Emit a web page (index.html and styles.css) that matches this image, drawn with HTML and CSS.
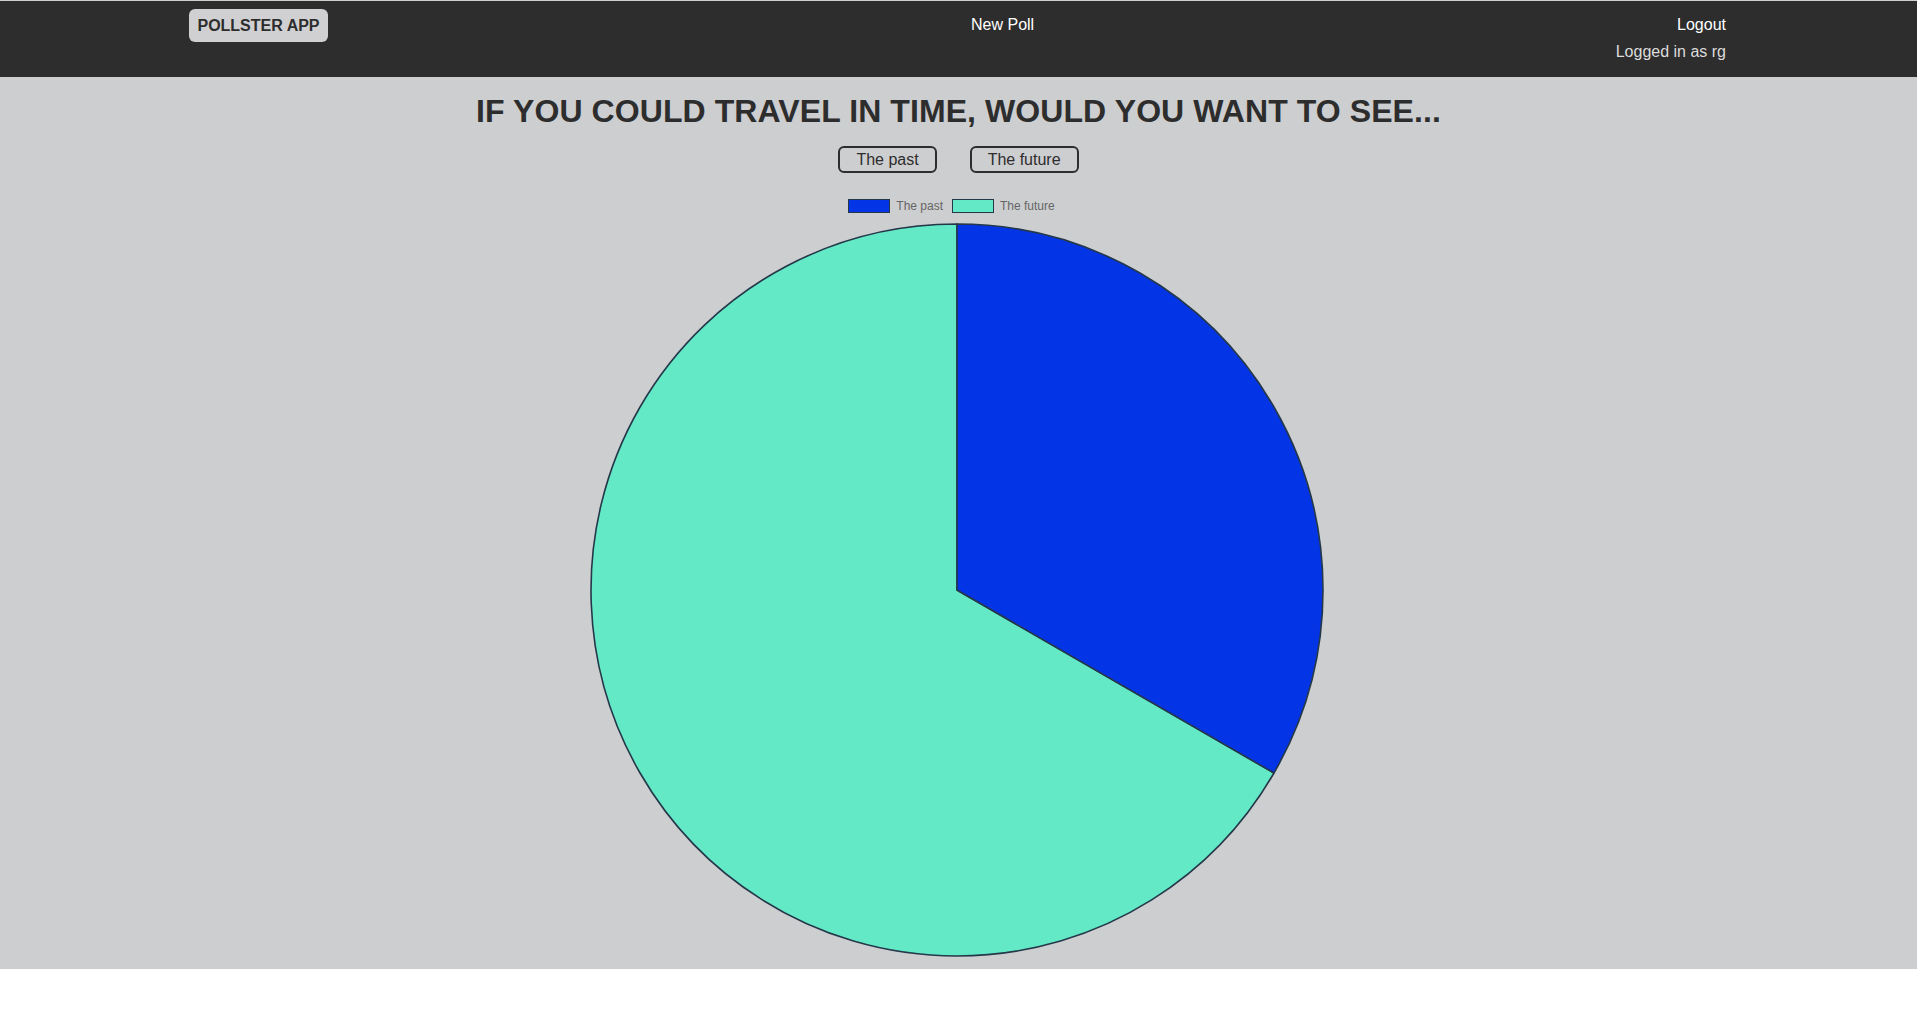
FILE: index.html
```html
<!DOCTYPE html>
<html>
<head>
<meta charset="utf-8">
<title>Pollster App</title>
<link rel="stylesheet" href="styles.css">
</head>
<body>
<div class="page">
  <header class="topbar">
    <a class="brand">POLLSTER APP</a>
    <a class="newpoll">New Poll</a>
    <div class="account">
      <a class="logout">Logout</a>
      <span class="who">Logged in as rg</span>
    </div>
  </header>
  <main class="main">
    <h1 class="question">IF YOU COULD TRAVEL IN TIME, WOULD YOU WANT TO SEE...</h1>
    <div class="answers">
      <button class="answer">The past</button>
      <button class="answer">The future</button>
    </div>
    <div class="chart">
      <div class="legend">
        <span class="legend-item"><span class="swatch swatch-past"></span>The past</span>
        <span class="legend-item"><span class="swatch swatch-future"></span>The future</span>
      </div>
      <svg class="pie" width="736" height="736" viewBox="0 0 736 736">
        <path d="M368 368 L684.97 551 A366 366 0 1 1 368 2 Z" fill="#63e9c6" stroke="#24384a" stroke-width="1.6" stroke-linejoin="round"/>
        <path d="M368 368 L368 2 A366 366 0 0 1 684.97 551 Z" fill="#0334e6" stroke="#24384a" stroke-width="1.6" stroke-linejoin="round"/>
      </svg>
    </div>
  </main>
</div>
</body>
</html>
```

FILE: styles.css
```css
* { box-sizing: border-box; }

html, body {
  margin: 0;
  padding: 0;
  background: #ffffff;
  font-family: "Liberation Sans", Arial, sans-serif;
}

.page {
  width: 1917px;
  border-top: 1px solid #cfcfd1;
}

.topbar {
  height: 76px;
  background: #2d2d2d;
  display: flex;
  align-items: flex-start;
  padding: 0 191px 0 189px;
}

.brand {
  margin-top: 8px;
  background: #d0d0d2;
  color: #2d2d2d;
  font-weight: bold;
  font-size: 16px;
  line-height: 18px;
  padding: 8px 8px 7px 8px;
  border-radius: 6px;
  width: 139px;
  text-align: center;
}

.newpoll {
  margin-top: 15px;
  margin-left: 643px;
  color: #ffffff;
  font-size: 16px;
  line-height: 18px;
}

.account {
  margin-left: auto;
  margin-top: 15px;
  display: flex;
  flex-direction: column;
  align-items: flex-end;
  font-size: 16px;
  line-height: 18px;
}

.logout { color: #ffffff; }

.who {
  color: #dcdcdc;
  margin-top: 9px;
}

.main {
  background: #cdced0;
  display: flex;
  flex-direction: column;
  align-items: center;
  padding: 16px 0 11px 0;
}

.question {
  margin: 0;
  font-size: 32px;
  line-height: 37px;
  font-weight: bold;
  color: #2d2d2d;
  letter-spacing: 0.08px;
}

.answers {
  margin-top: 16px;
  display: flex;
  gap: 33px;
}

.answer {
  font-family: "Liberation Sans", Arial, sans-serif;
  font-size: 16px;
  line-height: 19px;
  height: 27px;
  padding: 0 16px;
  color: #2d2d2d;
  background: transparent;
  border: 2px solid #2d2d2d;
  border-radius: 6px;
}

.chart {
  display: flex;
  flex-direction: column;
  align-items: center;
  padding-right: 4px;
}

.legend {
  margin-top: 26px;
  display: flex;
  gap: 9px;
  font-size: 12px;
  line-height: 14px;
  color: #666666;
  margin-right: 10px;
}

.legend-item {
  display: flex;
  align-items: center;
}

.swatch {
  width: 42px;
  height: 14px;
  margin-right: 6px;
  border: 1px solid #24384a;
}

.swatch-past { background: #0334e6; }
.swatch-future { background: #63e9c6; }

.pie {
  display: block;
  margin-top: 9px;
}
```
